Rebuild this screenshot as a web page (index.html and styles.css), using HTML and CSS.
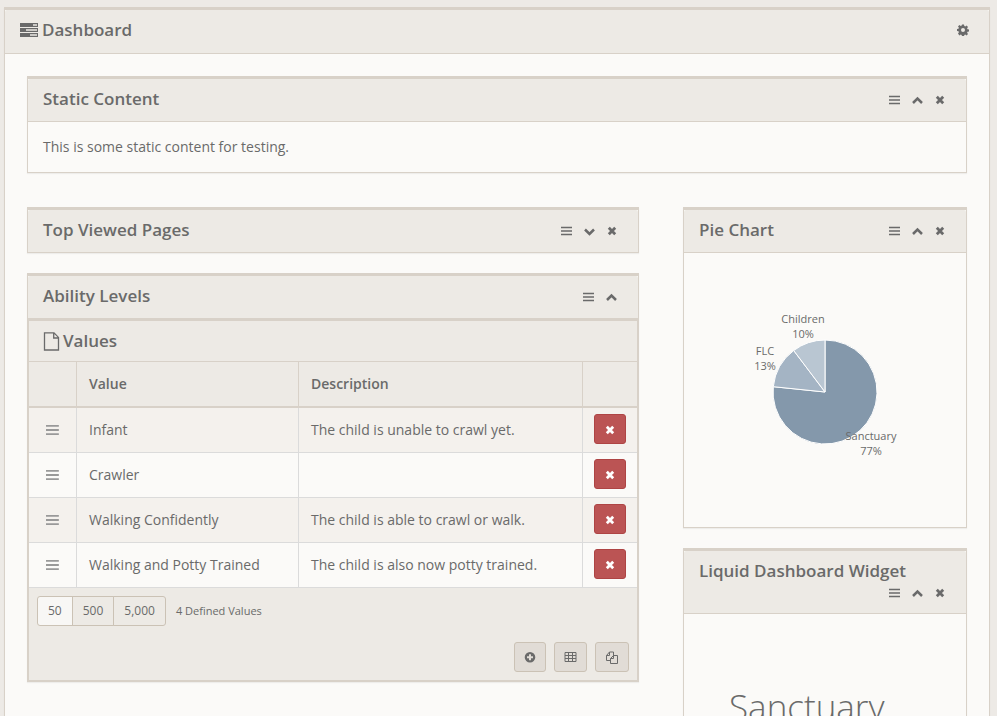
FILE: index.html
```html
<!DOCTYPE html>
<html lang="en">
<head>
<meta charset="utf-8">
<title>Dashboard</title>
<link rel="stylesheet" href="styles.css">
</head>
<body>
<svg class="sprite" aria-hidden="true">
  <symbol id="bars" viewBox="0 0 12 10"><path d="M0 1.500h11M0 5h11M0 8.500h11" fill="none" stroke="currentColor" stroke-width="1.600"/></symbol>
  <symbol id="up" viewBox="0 0 12 10"><path d="M1 8 5.500 3.500 10 8" fill="none" stroke="currentColor" stroke-width="2.500"/></symbol>
  <symbol id="down" viewBox="0 0 12 10"><path d="M1 3.500 5.500 8 10 3.500" fill="none" stroke="currentColor" stroke-width="2.500"/></symbol>
  <symbol id="times" viewBox="0 0 10 10"><path d="m1.800 1.800 6.400 6.400m0-6.400-6.400 6.400" fill="none" stroke="currentColor" stroke-width="2.800"/></symbol>
  <symbol id="gear" viewBox="0 0 12 12"><path fill="currentColor" fill-rule="evenodd" d="M5 .5h2l.3 1.500 1 .4L9.600 1.500 11 2.900l-.9 1.300.4 1 1.500.3v2l-1.500.3-.4 1 .9 1.300-1.400 1.400-1.300-.9-1 .4-.3 1.500H5l-.3-1.500-1-.4-1.300.9L1 9.600l.9-1.300-.4-1L0 7V5l1.500-.3.4-1L1 2.400 2.400 1l1.300.9 1-.4zM6 4a2 2 0 1 0 0 4 2 2 0 0 0 0-4z"/></symbol>
</svg>

<main class="panel page">
  <header class="panel-head page-head">
    <h1 class="title">
      <svg class="icon-tasks" viewBox="0 0 18 14" aria-hidden="true"><path fill="currentColor" fill-rule="evenodd" d="M0 0h18v4H0zM13 1.300h4v1.400h-4zM0 5h18v4H0zM6 6.300h11v1.400H6zM0 10h18v4H0zM10 11.300h7v1.400h-7z"/></svg>
      Dashboard
    </h1>
    <div class="controls">
      <button class="control narrow" type="button" aria-label="Settings"><svg class="icon-gear"><use href="#gear"/></svg></button>
    </div>
  </header>

  <div class="page-body">
    <section class="panel">
      <header class="panel-head">
        <h2 class="title">Static Content</h2>
        <div class="controls">
          <button class="control" type="button" aria-label="Move"><svg class="icon"><use href="#bars"/></svg></button>
          <button class="control" type="button" aria-label="Collapse"><svg class="icon"><use href="#up"/></svg></button>
          <button class="control narrow" type="button" aria-label="Remove"><svg class="icon-x"><use href="#times"/></svg></button>
        </div>
      </header>
      <div class="panel-body"><p class="text">This is some static content for testing.</p></div>
    </section>

    <div class="columns">
      <div class="col-main">
        <section class="panel">
          <header class="panel-head collapsed">
            <h2 class="title">Top Viewed Pages</h2>
            <div class="controls">
              <button class="control" type="button" aria-label="Move"><svg class="icon"><use href="#bars"/></svg></button>
              <button class="control" type="button" aria-label="Expand"><svg class="icon"><use href="#down"/></svg></button>
              <button class="control narrow" type="button" aria-label="Remove"><svg class="icon-x"><use href="#times"/></svg></button>
            </div>
          </header>
        </section>

        <section class="panel">
          <header class="panel-head collapsed">
            <h2 class="title">Ability Levels</h2>
            <div class="controls">
              <button class="control" type="button" aria-label="Move"><svg class="icon"><use href="#bars"/></svg></button>
              <button class="control" type="button" aria-label="Collapse"><svg class="icon"><use href="#up"/></svg></button>
            </div>
          </header>
          <div class="panel grid-panel">
            <header class="panel-head grid-head">
              <h3 class="title">
                <svg class="icon-file" viewBox="0 0 16 19" aria-hidden="true"><path d="M1 .9h9.500L15 5.400V18H1zM10.200 1v5H15" fill="none" stroke="currentColor" stroke-width="1.300"/></svg>
                Values
              </h3>
            </header>
            <table class="grid">
              <colgroup><col class="c-drag"><col class="c-value"><col class="c-desc"><col class="c-delete"></colgroup>
              <thead>
                <tr><th></th><th>Value</th><th>Description</th><th></th></tr>
              </thead>
              <tbody>
                <tr>
                  <td class="drag"><svg class="icon-drag"><use href="#bars"/></svg></td><td>Infant</td><td>The child is unable to crawl yet.</td>
                  <td class="action"><button class="delete" type="button" aria-label="Delete"><svg class="icon-x"><use href="#times"/></svg></button></td>
                </tr>
                <tr>
                  <td class="drag"><svg class="icon-drag"><use href="#bars"/></svg></td><td>Crawler</td><td></td>
                  <td class="action"><button class="delete" type="button" aria-label="Delete"><svg class="icon-x"><use href="#times"/></svg></button></td>
                </tr>
                <tr>
                  <td class="drag"><svg class="icon-drag"><use href="#bars"/></svg></td><td>Walking Confidently</td><td>The child is able to crawl or walk.</td>
                  <td class="action"><button class="delete" type="button" aria-label="Delete"><svg class="icon-x"><use href="#times"/></svg></button></td>
                </tr>
                <tr>
                  <td class="drag"><svg class="icon-drag"><use href="#bars"/></svg></td><td>Walking and Potty Trained</td><td>The child is also now potty trained.</td>
                  <td class="action"><button class="delete" type="button" aria-label="Delete"><svg class="icon-x"><use href="#times"/></svg></button></td>
                </tr>
              </tbody>
            </table>
            <footer class="grid-foot">
              <div class="paging">
                <div class="sizes">
                  <button class="size active" type="button">50</button>
                  <button class="size" type="button">500</button>
                  <button class="size" type="button">5,000</button>
                </div>
                <span class="count">4 Defined Values</span>
              </div>
              <div class="actions">
                <button class="tool" type="button" aria-label="Add"><svg class="icon-add" viewBox="0 0 12 12"><path fill="currentColor" fill-rule="evenodd" d="M6 1a5.300 5.300 0 1 0 0 10.600A5.300 5.300 0 0 0 6 1zM5 3.200h2v2h2v2H7v2H5v-2H3v-2h2z"/></svg></button>
                <button class="tool" type="button" aria-label="Export"><svg class="icon-table" viewBox="0 0 13 12"><path fill="none" stroke="currentColor" d="M1 1.500h11v9H1zM1 4.500h11M1 7.500h11M4.500 1.500v9M8.500 1.500v9"/></svg></button>
                <button class="tool" type="button" aria-label="Merge"><svg class="icon-copy" viewBox="0 0 14 14"><path fill="none" stroke="currentColor" d="M5.500 10.500h-4V5.500l3-3.500h4v3M4.500 2v3.500h-3M5.500 13.500V8.500l3-3h4v8zM8.500 5v3.500h-3"/></svg></button>
              </div>
            </footer>
          </div>
        </section>
      </div>

      <div class="col-side">
        <section class="panel">
          <header class="panel-head">
            <h2 class="title">Pie Chart</h2>
            <div class="controls">
              <button class="control" type="button" aria-label="Move"><svg class="icon"><use href="#bars"/></svg></button>
              <button class="control" type="button" aria-label="Collapse"><svg class="icon"><use href="#up"/></svg></button>
              <button class="control narrow" type="button" aria-label="Remove"><svg class="icon-x"><use href="#times"/></svg></button>
            </div>
          </header>
          <svg class="pie" viewBox="0 0 282 274" role="img" aria-label="Attendance by location">
            <g stroke="#fff">
              <path fill="#8498ab" d="M141 139V87A52 52 0 1 1 89.300 133.700z"/>
              <path fill="#a4b4c4" d="M141 139 89.300 133.700A52 52 0 0 1 109.700 97.500z"/>
              <path fill="#b9c6d2" d="M141 139 109.700 97.500A52 52 0 0 1 141 87z"/>
            </g>
            <g class="pie-labels">
              <text x="119" y="70">Children</text><text x="119" y="85">10%</text>
              <text x="81" y="102">FLC</text><text x="81" y="117">13%</text>
              <text x="187" y="187">Sanctuary</text><text x="187" y="202">77%</text>
            </g>
          </svg>
        </section>

        <section class="panel">
          <header class="panel-head">
            <h2 class="title">Liquid Dashboard Widget</h2>
            <div class="controls">
              <button class="control" type="button" aria-label="Move"><svg class="icon"><use href="#bars"/></svg></button>
              <button class="control" type="button" aria-label="Collapse"><svg class="icon"><use href="#up"/></svg></button>
              <button class="control narrow" type="button" aria-label="Remove"><svg class="icon-x"><use href="#times"/></svg></button>
            </div>
          </header>
          <div class="liquid"><p class="headline">Sanctuary</p></div>
        </section>
      </div>
    </div>
  </div>
</main>
</body>
</html>
```
FILE: styles.css
```css
* { box-sizing: border-box; }

body {
  margin: 0;
  padding: 7px 7px 0 4px;
  background: #edeae6;
  color: #6a6a6a;
  font: 14px/20px "Open Sans", sans-serif;
}

h1, h2, h3, p { margin: 0; }
button { font: inherit; color: inherit; padding: 0; cursor: pointer; }
svg { display: block; flex: none; }
.sprite { display: none; }

.panel {
  background: #fbfaf8;
  border: 1px solid #d8d1c8;
  border-top-width: 3px;
  box-shadow: 0 1px 1px rgba(0, 0, 0, .05);
}

.panel-head {
  display: flex;
  flex-wrap: wrap;
  align-items: center;
  padding: 9px 15px 11px;
  background: #edeae5;
  border-bottom: 1px solid #d8d1c8;
  border-radius: 2px 2px 0 0;
}
.panel-head.collapsed { border-bottom: 0; }
.page-head { padding-bottom: 12px; }
.grid-head { padding: 9px 14px; }

.title {
  display: flex;
  align-items: center;
  gap: 4px;
  font-size: 17px;
  font-weight: 600;
  line-height: 22px;
}
.grid-head .title { gap: 3px; }
.controls { display: flex; margin-left: auto; }
.control {
  display: flex;
  align-items: flex-end;
  justify-content: center;
  width: 23px;
  height: 20px;
  padding-bottom: 4px;
  border: 0;
  background: none;
}
.control.narrow { width: 22px; }

.icon { width: 12px; height: 10px; }
.icon-x { width: 10px; height: 10px; }
.icon-gear { width: 12px; height: 12px; }
.icon-tasks { width: 18px; height: 14px; }
.icon-file { width: 17px; height: 19px; }
.icon-drag { width: 14px; height: 12px; margin: auto; color: #999; }
.icon-add { width: 12px; height: 12px; }
.icon-table { width: 13px; height: 12px; }
.icon-copy { width: 14px; height: 14px; }

.page-body { padding: 22px; }
.panel-body { padding: 15px; }

.columns {
  display: grid;
  grid-template-columns: repeat(12, minmax(0, 1fr));
  gap: 44px;
  margin-top: 34px;
}
.col-main, .col-side {
  display: flex;
  flex-direction: column;
  gap: 20px;
}
.col-main { grid-column: span 8; }
.col-side { grid-column: span 4; }

.grid-panel { box-shadow: none; background: #edeae5; }
.grid {
  width: 100%;
  table-layout: fixed;
  border-collapse: separate;
  border-spacing: 0;
}
.c-drag { width: 48px; }
.c-value { width: 222px; }
.c-delete { width: 54px; }
.grid th, .grid td {
  height: 45px;
  padding: 0 12px;
  text-align: left;
  border-right: 1px solid #dbdbdb;
  border-bottom: 1px solid #dbdbdb;
}
.grid th {
  height: 46px;
  font-weight: 600;
  border-right-color: #d8d1c8;
  border-bottom: 2px solid #d8d1c8;
}
.grid th:last-child, .grid td:last-child { border-right: 0; }
.grid tbody tr { background: #fbfaf8; }
.grid tbody tr:nth-child(odd) { background: #f4f1ed; }
.grid td.drag { padding: 0; }
.grid td.action { padding: 6px 0 8px; }

.delete {
  display: flex;
  align-items: center;
  justify-content: center;
  width: 32px;
  height: 30px;
  margin: 0 auto;
  padding-top: 2px;
  color: #fff;
  background: #bb5454;
  border: 1px solid #ae4444;
  border-radius: 3px;
}

.grid-foot { padding: 8px; }
.paging { display: flex; align-items: center; gap: 10px; }
.sizes { display: flex; }
.size {
  height: 30px;
  padding: 0 10px;
  font-size: 12px;
  background: #edeae5;
  border: 1px solid #cbc2b5;
}
.size + .size { margin-left: -1px; }
.size:first-child { border-radius: 3px 0 0 3px; }
.size:last-child { border-radius: 0 3px 3px 0; }
.size.active { background: #f8f7f5; }
.count { font-size: 11px; }
.actions {
  display: flex;
  justify-content: flex-end;
  gap: 8px;
  margin-top: 16px;
}
.tool {
  display: flex;
  align-items: center;
  justify-content: center;
  height: 30px;
  padding: 0 9px;
  background: #e1dcd6;
  border: 1px solid #cbc2b5;
  border-radius: 3px;
}

.pie { width: 100%; height: auto; }
.pie-labels { font-size: 11px; text-anchor: middle; fill: #6a6a6a; }

.liquid { padding: 73px 45px 30px; }
.headline { font-size: 35px; font-weight: 300; line-height: 40px; }
```
